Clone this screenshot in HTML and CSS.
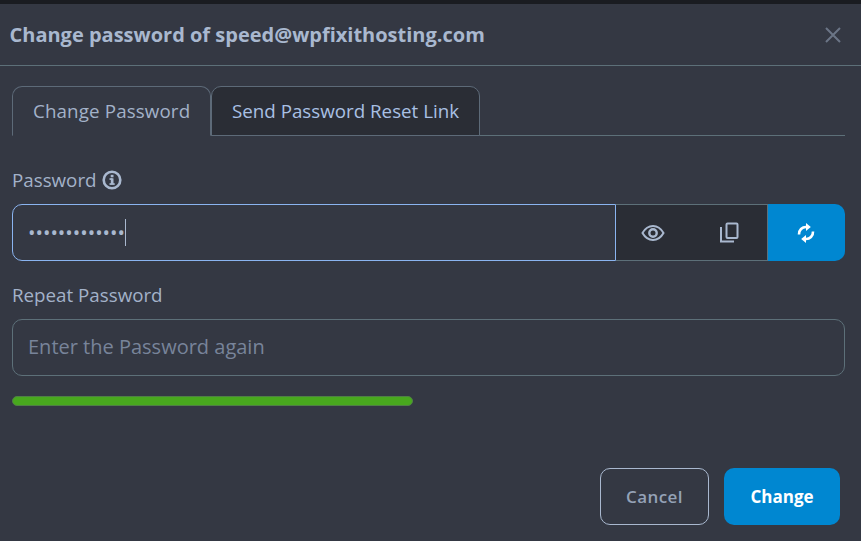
FILE: index.html
```html
<!DOCTYPE html>
<html>
<head lang="en">
    <meta charset="UTF-8">
    <title>Change password</title>
    <link rel="stylesheet" href="styles.css">
</head>
<body>
    <div class="modal">
        <div class="modal-header">
            <h4>Change password of speed@wpfixithosting.com</h4>
            <svg class="close" width="16" height="16" viewBox="0 0 16 16"><path d="M1 1L15 15M15 1L1 15" stroke="#6b7586" stroke-width="2" fill="none"/></svg>
        </div>
        <div class="modal-body">
            <ul class="tabs">
                <li class="tab current">Change Password</li>
                <li class="tab">Send Password Reset Link</li>
            </ul>

            <div class="label-row">
                <label>Password</label>
                <svg width="20" height="20" viewBox="0 0 20 20"><circle cx="10" cy="10" r="8.300" fill="none" stroke="#a9b8cf" stroke-width="2.600"/><rect x="8.800" y="8.400" width="2.700" height="5.800" fill="#a9b8cf"/><rect x="7.500" y="8.200" width="3" height="1.700" fill="#a9b8cf"/><rect x="7.500" y="13.200" width="5.200" height="1.700" fill="#a9b8cf"/><rect x="8.700" y="4.800" width="2.800" height="2.500" fill="#a9b8cf"/></svg>
            </div>
            <div class="input-group">
                <div class="input focus"><span class="dots">•••••••••••••</span><span class="caret"></span></div>
                <button class="addon first">
                    <svg width="24" height="24" viewBox="0 0 24 24" fill="none" stroke="#a9b8cf"><path d="M1.500 12C4 7.600 7.600 5 12 5S20 7.600 22.500 12C20 16.400 16.400 19 12 19S4 16.400 1.500 12Z" stroke-width="2"/><circle cx="12" cy="12" r="3.700" stroke-width="2.400"/></svg>
                </button>
                <button class="addon">
                    <svg width="24" height="24" viewBox="0 0 24 24" fill="none" stroke="#a9b8cf" stroke-width="2"><rect x="8.500" y="2.500" width="11" height="14.500" rx="1"/><path d="M3 6V20.500H16"/></svg>
                </button>
                <button class="addon primary">
                    <svg width="20" height="20" viewBox="0 0 20 20" fill="none"><path d="M3 11.500A7 7 0 0 1 10.500 4" stroke="#fff" stroke-width="2.600"/><path d="M17 8.500A7 7 0 0 1 9.500 16" stroke="#fff" stroke-width="2.600"/><path d="M10 0L10 8L14.800 4Z" fill="#fff"/><path d="M10 12L10 20L5.200 16Z" fill="#fff"/></svg>
                </button>
            </div>

            <div class="label-row second">
                <label>Repeat Password</label>
            </div>
            <input class="input" type="text" placeholder="Enter the Password again">

            <div class="strength"></div>

            <div class="actions">
                <button class="btn cancel">Cancel</button>
                <button class="btn change">Change</button>
            </div>
        </div>
    </div>
</body>
</html>
```

FILE: styles.css
```css
* {
    padding: 0;
    margin: 0;
    box-sizing: border-box;
    list-style: none;
}
html, body {
    height: 100%;
}
body {
    background-color: #343843;
    font-family: "Open Sans", "Liberation Sans", sans-serif;
    color: #a3b2c9;
    overflow: hidden;
}
.modal {
    height: 541px;
    border-top: 4px solid #1a1c21;
}
.modal-header {
    height: 62px;
    padding: 0 20px 0 9.500px;
    display: flex;
    align-items: center;
    justify-content: space-between;
    border-bottom: 1px solid #5d7079;
}
.modal-header h4 {
    font-size: 20px;
    font-weight: 700;
    color: #a9b8cf;
}
.modal-body {
    padding: 20px 16px 0 12px;
}
.tabs {
    display: flex;
    height: 50px;
    border-bottom: 1px solid #5d7079;
}
.tab {
    padding: 0 20px;
    font-size: 18.750px;
    line-height: 47px;
    height: 50px;
    white-space: nowrap;
    color: #a9c0e4;
    background-color: #2a2d35;
    border: 1px solid #5d6a78;
    border-radius: 10px 10px 0 0;
}
.tab.current {
    width: 199px;
    letter-spacing: 0.130px;
    color: #a3b2c9;
    background-color: #343843;
    border-bottom-color: #343843;
}
.label-row {
    display: flex;
    align-items: center;
    gap: 5px;
    height: 24px;
    padding-bottom: 2px;
    margin-top: 32px;
    font-size: 18.750px;
}
.label-row svg {
    margin-top: 2px;
}
.label-row.second {
    margin-top: 22px;
}
.input-group {
    display: flex;
    height: 57px;
    margin-top: 12px;
}
.input {
    display: block;
    width: 100%;
    height: 57px;
    padding: 0 15px 2px;
    font-family: inherit;
    font-size: 20px;
    color: #a9b8cf;
    background-color: transparent;
    border: 1px solid #5d7079;
    border-radius: 10px;
    outline: none;
}
.input::placeholder {
    color: #78849a;
}
.input.focus {
    flex: 1;
    display: flex;
    align-items: center;
    padding-bottom: 0;
    border-color: #8ab4f0;
    border-radius: 10px 0 0 10px;
}
input.input {
    margin-top: 12px;
}
.dots {
    font-size: 19.850px;
    margin-bottom: 1px;
}
.caret {
    width: 1px;
    height: 27px;
    background-color: #a9b8cf;
}
.addon {
    width: 76px;
    display: flex;
    align-items: center;
    justify-content: center;
    background-color: #2a2d35;
    border: 1px solid #5d7079;
    border-left: 0;
}
.addon.first {
    padding-right: 2px;
    border-right: 0;
}
.addon.primary {
    width: 77px;
    padding-right: 2px;
    background-color: #0087d1;
    border: 0;
    border-radius: 0 10px 10px 0;
}
.strength {
    width: 401px;
    height: 10px;
    margin-top: 20px;
    background-color: #48a81e;
    border: 1px solid #4f7f45;
    border-radius: 5px;
}
.actions {
    display: flex;
    justify-content: flex-end;
    gap: 15px;
    margin-top: 62px;
    padding-right: 5px;
}
.btn {
    height: 57px;
    font-family: inherit;
    font-size: 17px;
    border-radius: 10px;
}
.cancel {
    width: 109px;
    font-weight: 600;
    letter-spacing: 0.400px;
    color: #94a2b7;
    background-color: transparent;
    border: 1px solid #a9b8cf;
}
.change {
    width: 116px;
    font-weight: 700;
    color: #fff;
    background-color: #0087d1;
    border: 0;
}
```
